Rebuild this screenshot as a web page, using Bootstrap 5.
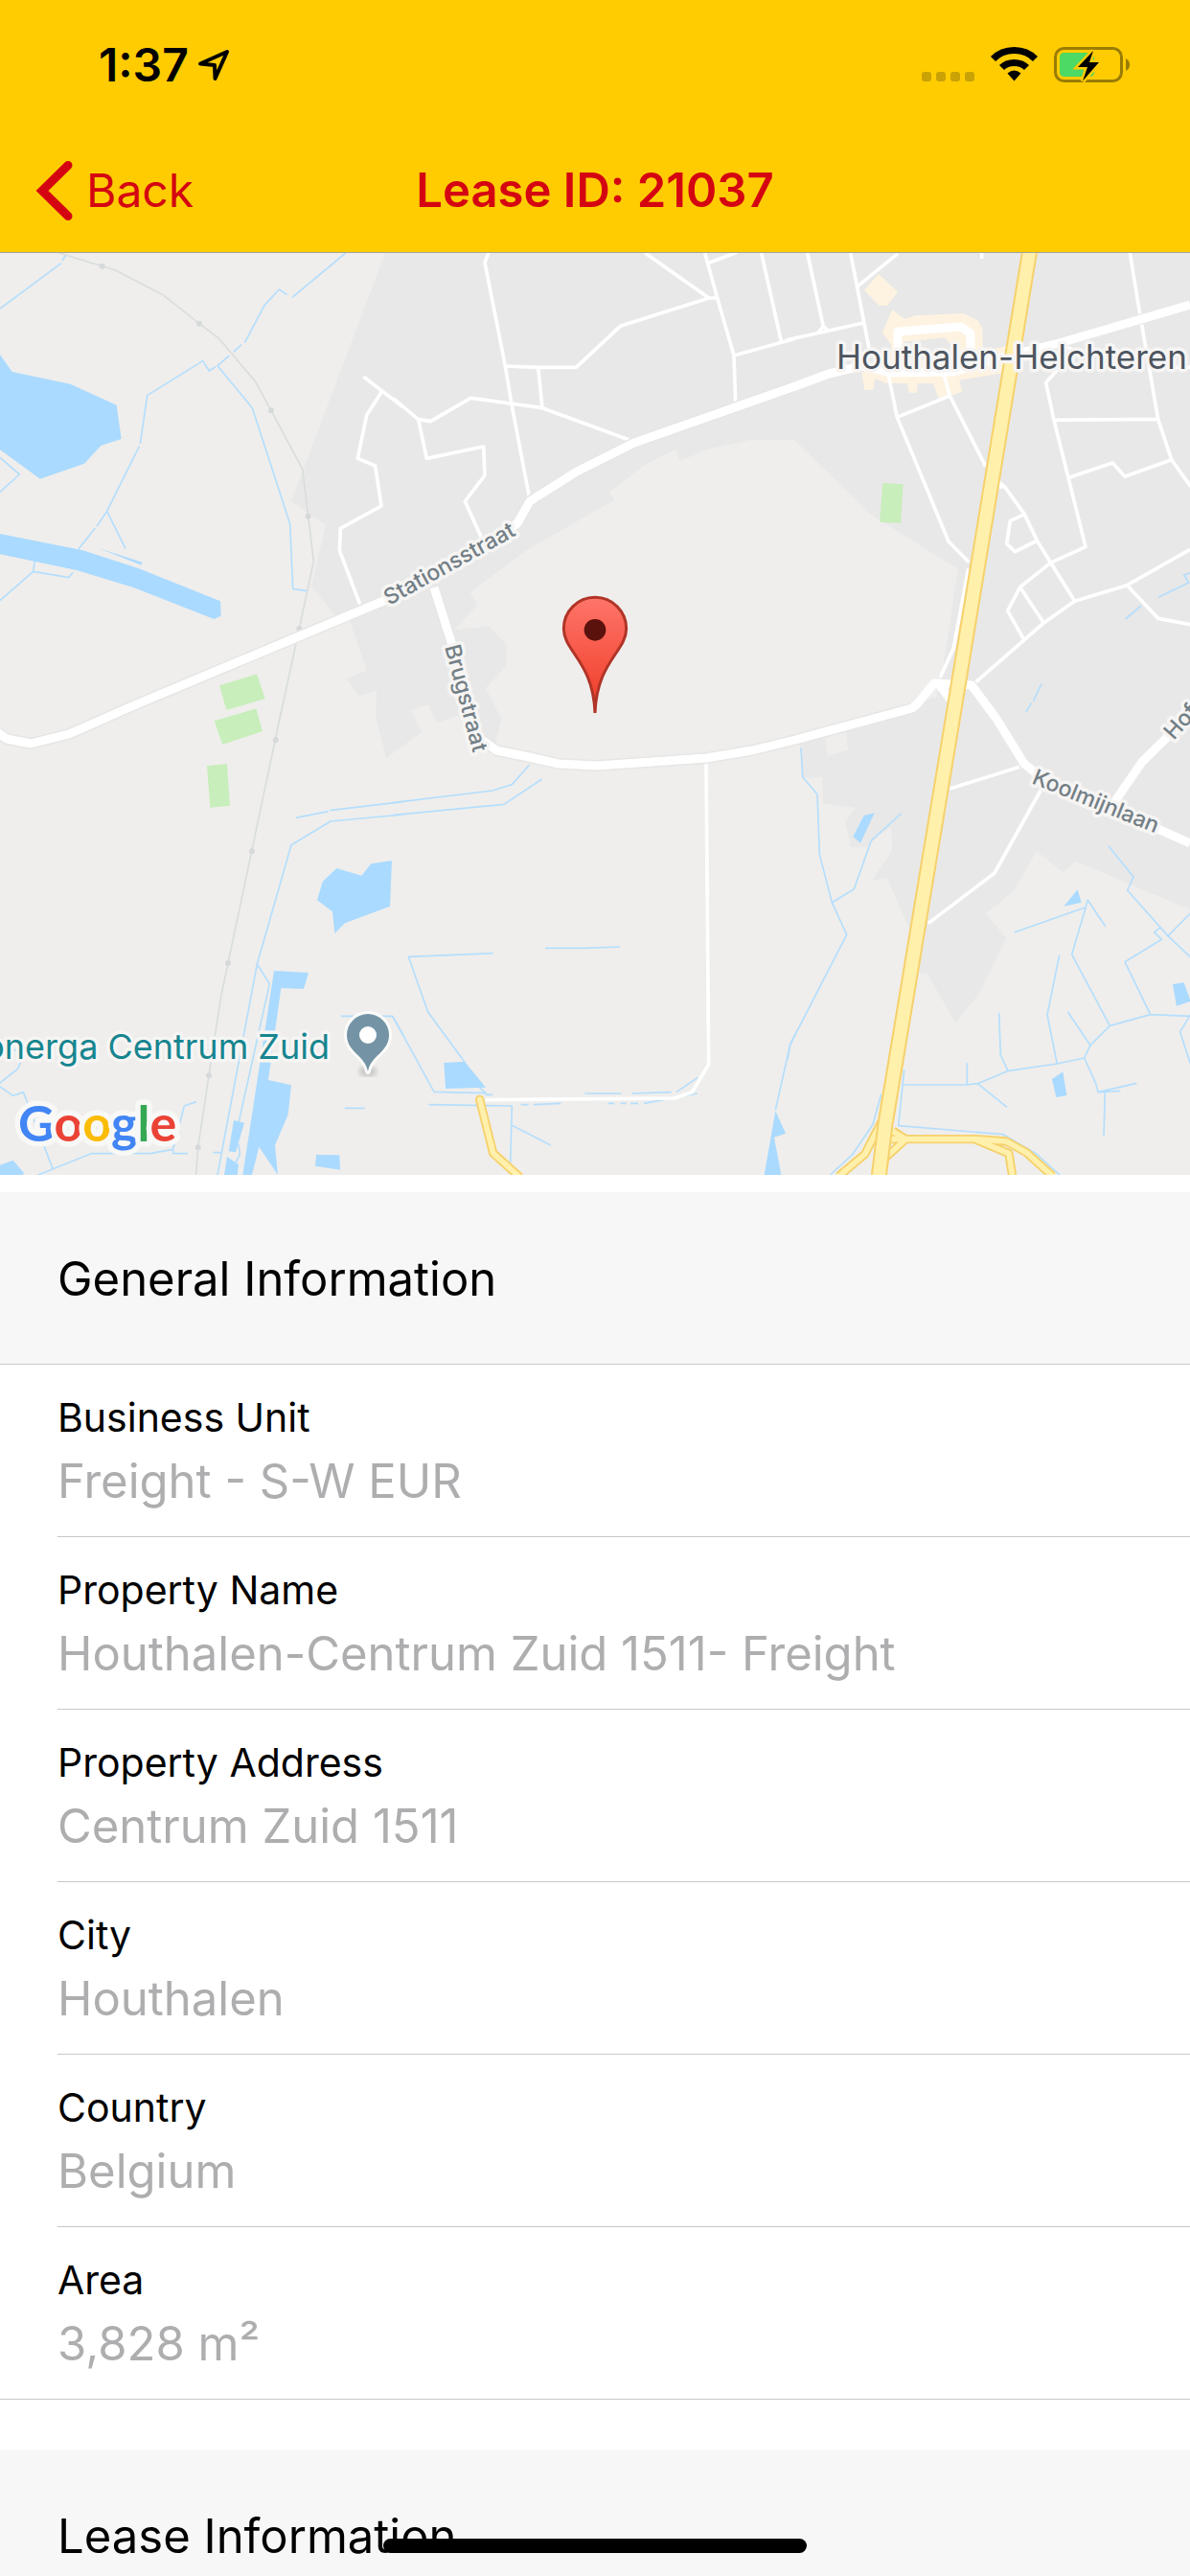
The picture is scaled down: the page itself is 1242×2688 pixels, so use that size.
<!DOCTYPE html>
<html lang="en">
<head>
<meta charset="utf-8">
<meta name="viewport" content="width=device-width, initial-scale=1">
<title>Lease ID: 21037</title>
<link href="https://cdn.jsdelivr.net/npm/bootstrap@5.3.0/dist/css/bootstrap.min.css" rel="stylesheet">
<style>
  body { font-family: Inter, "Liberation Sans", sans-serif; font-size: 49px; color: #000; }
  .app-header { background: #ffcc02; border-bottom: 1px solid #a7a39a; }
  .status-bar { height: 132px; padding: 4px 62px 0 103px; }
  .status-time { font-size: 48px; font-weight: 600; line-height: 60px; }
  .title-bar { height: 131px; padding: 2px 37px 0; color: #d40511; --bs-gutter-x: 0; }
  .title-bar a { color: inherit; gap: 14px; font-size: 48px; line-height: 64px; }
  .title-bar h1 { font-size: 49px; font-weight: 600; line-height: 64px; }
  .scroll-area { scrollbar-width: none; }
  .section-head { background: #f7f7f7; height: 180px; padding: 2px 60px 0; border-bottom: 1px solid #c8c7cc; }
  .section-head h2 { font-size: 49px; font-weight: 400; line-height: 64px; }
  .field-list { padding-left: 60px; border-bottom: 1px solid #c8c7cc; }
  .field-row { padding: 28px 0 25px; border-bottom: 1px solid #c8c7cc; }
  .field-row:last-child { border-bottom: 0; }
  .field-row dt { font-size: 41px; font-weight: 400; line-height: 54px; margin-bottom: 8px; }
  .field-row dd { line-height: 64px; color: #aeaeb0; }
  .gap-top { margin-top: 18px; }
  .gap-section { margin-top: 52px; }
  .home-bar { width: 442px; height: 15px; bottom: 24px; background: #000; }

  .map text { font-family: Inter, "Liberation Sans", sans-serif; paint-order: stroke; stroke: #f6f5f4; stroke-width: 7px; stroke-linejoin: round; }
  .map .street { font-size: 23px; font-weight: 500; fill: #737f86; }
  .map .town { font-size: 35px; fill: #4d5560; }
  .map .poi { font-size: 36px; fill: #16858f; }
  .map .brand { font-family: Lato, sans-serif; font-size: 52px; font-weight: 700; stroke: #f8f8f7; stroke-width: 11px; }
  .stream { fill: none; stroke: #b5defc; stroke-width: 5; stroke-linejoin: round; }
  .lake { fill: #aadaff; }
  .park { fill: #c8eebb; }
  .shop { fill: #fef3e0; }
  .rail { fill: none; stroke: #dadddd; stroke-width: 5; }
  .lane { fill: none; stroke: #fff; stroke-width: 11; stroke-linejoin: round; }
  .road { fill: none; stroke: #fff; stroke-width: 9; stroke-linejoin: round; }
  .road-edge { fill: none; stroke: #e6e6e5; stroke-width: 12; stroke-linejoin: round; }
  .ramp-edge { fill: none; stroke: #f6d16c; stroke-width: 28; stroke-linejoin: round; }
  .ramp { fill: none; stroke: #fff0ac; stroke-width: 17; stroke-linejoin: round; }
</style>
<script src="https://cdn.jsdelivr.net/npm/bootstrap@5.3.0/dist/js/bootstrap.bundle.min.js"></script>
</head>
<body class="vh-100 overflow-hidden d-flex flex-column bg-white">

<header class="app-header flex-shrink-0">
  <div class="status-bar d-flex align-items-center justify-content-between">
    <div class="d-flex align-items-center gap-2">
      <span class="status-time">1:37</span>
      <svg width="36" height="36" viewBox="0 0 36 36" aria-label="Location"><path d="M4 16.500 L32 4 L19.500 32 L19 18 Z" fill="none" stroke="#000" stroke-width="4" stroke-linejoin="round"/></svg>
    </div>
    <svg width="220" height="40" viewBox="0 0 220 40" aria-label="Network and battery">
      <g fill="#c9a206"><rect x="2" y="27" width="10" height="10" rx="3"/><rect x="17" y="27" width="10" height="10" rx="3"/><rect x="32" y="27" width="10" height="10" rx="3"/><rect x="47" y="27" width="10" height="10" rx="3"/></g>
      <g fill="none" stroke="#000" stroke-width="7"><path d="M76.500 13.500 C88 1.500 109 1.500 120.500 13.500"/><path d="M85.500 22.500 C92 15.700 105 15.700 111.500 22.500"/></g>
      <path d="M91.500 28.500 Q98.500 22.500 105.500 28.500 L98.500 36.500Z"/>
      <rect x="141.500" y="2.500" width="69" height="34" rx="9" fill="none" stroke="#9a7c06" stroke-width="3"/>
      <path d="M215 13 q4 2 4 6.500 t-4 6.500z" fill="#9a7c06"/>
      <rect x="146" y="7" width="36" height="25" rx="4.500" fill="#4cd964"/>
      <path d="M181 5 L165 22 h10 L170 36.500 L187 17 h-10 Z" fill="#000" stroke="#ffcc02" stroke-width="5" stroke-linejoin="miter" paint-order="stroke"/>
    </svg>
  </div>
  <nav class="title-bar row align-items-center">
    <div class="col d-flex">
      <a href="#" class="d-flex align-items-center text-decoration-none">
        <svg width="39" height="64" viewBox="0 0 39 64" aria-hidden="true"><path d="M34 5.500 L7 32 L34 58.500" fill="none" stroke="#d40511" stroke-width="9" stroke-linecap="round" stroke-linejoin="miter"/></svg>
        <span>Back</span>
      </a>
    </div>
    <div class="col-auto"><h1 class="m-0">Lease ID: 21037</h1></div>
    <div class="col"></div>
  </nav>
</header>

<main class="scroll-area flex-grow-1 overflow-auto">
  <svg class="map d-block w-100" viewBox="0 264 1242 962" role="img" aria-label="Map of Houthalen-Helchteren">
    <defs>
      <linearGradient id="pinFill" x1="0" y1="0" x2="0" y2="1"><stop offset="0" stop-color="#fe7569"/><stop offset="1" stop-color="#f03a26"/></linearGradient>
      <filter id="soft"><feGaussianBlur stdDeviation="3"/></filter>
    </defs>
    <rect y="264" width="1242" height="962" fill="#efeeec"/>

    <!-- built-up areas -->
    <path fill="#e8e8e8" d="M402 264 L304 523 340 548 325 612 348 640 365 648 383 700 361 708 375 726 393 721 392 747 403 791 440 764 429 741 447 735 456 754 477 747 517 777 523 750 507 718 529 694 529 673 511 654 474 657 498 632 491 618 550 574 641 522 636 513 676 483 705 469 710 481 738 469 783 459 829 459 909 537 1000 594 982 710 977 728 890 750 822 773 835 777 838 812 858 811 859 838 893 843 882 858 888 884 905 884 909 877 930 863 931 887 910 919 926 916 948 967 960 1016 968 1016 997 1067 1022 1037 1050 979 1029 953 1058 930 1082 888 1109 910 1123 899 1242 949 V264Z"/>
    <path fill="#efeeec" d="M861 768 L883 763 885 783 864 789Z"/>

    <!-- north-west -->
    <g transform="translate(0 260) scale(.33333)">
      <path class="stream" d="M0 186 L192 44 M195 36 L206 18 M1082 12 L915 151 M899 143 L874 126 828 176 766 293 M756 299 L731 322 M718 333 L681 365 790 497 908 860 917 1063 960 1070 M675 368 L655 381 635 350 461 458 439 609 M436 617 L335 820 303 868 M298 873 L245 940 M335 820 L393 938 M0 652 L61 705 0 760 M0 1100 L104 1009 215 1028 228 1012 M104 1009 L109 975"/>
      <path class="lake" d="M0 330 L38 384 220 422 365 488 380 594 316 615 264 671 126 719 0 628Z M0 891 L260 943 435 1000 690 1102 692 1148 670 1158 420 1060 240 1005 0 955Z M308 936 L445 980 443 989Z"/>
      <path class="rail" d="M185 12 L360 65 510 143 624 233 686 280 800 415 849 505 947 688 965 836 982 978 937 1188 876 1470"/>
      <g fill="#d6d9da"><circle cx="320" cy="53" r="9"/><circle cx="624" cy="233" r="9"/><circle cx="849" cy="505" r="9"/><circle cx="965" cy="836" r="9"/><circle cx="937" cy="1188" r="9"/></g>
      <path class="park" d="M687 1366 L804 1330 830 1407 709 1443Z"/>
      <path class="lane" d="M1138 399 L1260 493 M1196 445 L1148 520 1120 655 1175 678 1194 804 1066 874 1063 943 1127 1112"/>
    </g>

    <!-- north -->
    <g transform="translate(410 260) scale(.33333)">
      <path class="lane" d="M300 10 L288 42 352 366 372 486 427 775 M352 366 L455 370 574 370 712 241 990 153 M790 12 L990 153 1016 153 M977 12 L1016 153 1068 333 1073 482 M985 44 L1078 10 M1154 12 L1216 288 M1068 333 L1260 280 M455 370 L468 497 M0 466 L80 533 118 539 244 466 468 497 742 598 M80 533 L106 655 284 618 288 708 226 789 285 920"/>
    </g>

    <!-- north-east -->
    <g transform="translate(822 260) scale(.33333)">
      <path class="shop" d="M240 128 L285 78 345 134 311 177 287 177Z M297 260 L328 190 366 218 400 208 550 201 595 222 610 250 612 320 700 300 690 385 537 410 547 445 520 456 472 465 456 420 408 420 404 449 380 449 375 420 310 420 273 405 268 440 241 440 232 385 320 360 325 300Z"/>
      <path fill="#e8e8e8" d="M362 290 L492 277 520 310 520 345 362 345Z"/>
      <path class="park" d="M298 732 L362 736 354 858 288 854Z"/>
      <path class="stream" d="M1260 1014 L1241 1020 1256 1044 1161 1090 M1107 1116 L1058 1158 M795 1361 L769 1415 M764 1421 L746 1450"/>
      <path class="lane" d="M62 12 L112 242 95 262 M112 242 L130 256 M-5 285 L237 231 M197 12 L255 310 M216 119 L345 14 M316 395 L343 526 504 915 568 980 M343 526 L508 459 490 395 M508 459 L620 680 M660 728 L680 744 742 830 782 914 899 1102 M660 744 H680 M742 830 L697 851 686 922 712 947 782 912 M823 982 L728 1058 802 1170 M728 1058 L689 1132 740 1222 M823 982 L933 932 834 535 809 418 850 372 M834 535 L1160 532 M877 716 L1018 669 1056 712 1202 659 M1072 12 L1103 202 M1109 236 L1160 532 1202 659 1262 743 M1260 940 L1063 1052 899 1102 802 1170 590 1355 M1063 1052 L1160 1156 1262 1175 M608 12 V30 M478 1340 L520 1248 566 1000 M1130 370 H1260 M850 300 L940 330"/>
    </g>

    <!-- south-west -->
    <g transform="translate(0 740) scale(.33333)">
      <path class="park" d="M671 37 L802 -2 822 69 697 111Z M648 178 L711 171 720 302 658 308Z"/>
      <path class="rail" d="M882 0 L714 795 692 900 654 1147 620 1372 614 1458"/>
      <g fill="#d6d9da"><circle cx="863" cy="97" r="9"/><circle cx="789" cy="445" r="9"/><circle cx="714" cy="795" r="9"/><circle cx="654" cy="1147" r="9"/><circle cx="620" cy="1372" r="9"/></g>
      <path class="stream" d="M926 340 L1028 320 M1033 317 L1260 290 M1260 330 L1035 351 912 425 805 798 844 860 746 1300 M805 798 L681 1458 M1067 961 H1229 L1262 1020 M1079 1249 H1142 M0 1170 L55 1126 79 1075 0 1055 M0 1182 L41 1210 73 1199 165 1438 M120 1458 L285 1391 H470 L542 1378 577 1242 615 1229 M542 1370 V1391 H588 M667 1388 H692 M746 1360 L751 1393 738 1420"/>
      <path class="lake" d="M1054 498 L1132 521 1162 484 1227 474 1221 617 1080 670 1048 702 1041 634 993 598 1010 540Z M858 819 L966 825 951 876 880 873 840 1161 912 1177 902 1270 861 1365 870 1458 811 1370 789 1458 H760Z M732 1287 L765 1295 738 1387 716 1384Z M711 1401 L747 1426 743 1458 H702Z M990 1395 L1063 1396 1065 1442 987 1430Z M0 1427 L41 1412 75 1452 71 1458 H0Z"/>
    </g>

    <!-- south -->
    <g transform="translate(410 740) scale(.33333)">
      <path class="stream" d="M0 293 L312 255 373 236 428 174 M0 332 L348 298 467 219 M314 764 L49 775 110 948 225 1105 M0 962 L129 1198 292 1202 260 1175 M290 1207 H313 M112 1238 L373 1242 368 1420 M373 1303 L494 1365 M477 748 H600 L710 744 M401 1238 H425 M440 1238 L526 1234 M601 1203 H715 M748 1203 L872 1199 M888 1199 L955 1153 M674 1234 H694 M713 1234 H731 M744 1234 H768 M786 1234 L953 1203 M1260 1018 L1244 1050 1198 1255"/>
      <path class="lake" d="M160 1107 L225 1103 291 1184 165 1188Z M1198 1258 L1230 1328 1194 1340 1216 1458 H1163Z"/>
      <path class="lane" d="M981 172 L989 1112 937 1199 880 1218 290 1223"/>
      <path class="ramp-edge" stroke-linecap="round" d="M272 1222 L314 1390 394 1462"/>
      <path class="ramp" stroke-linecap="round" d="M272 1222 L314 1390 394 1462"/>
    </g>

    <!-- south-east -->
    <g transform="translate(822 740) scale(.33333)">
      <path class="lane" d="M508 249 L726 181 M792 255 L648 513 440 671"/>
      <path class="stream" d="M42 121 L47 212 93 266 100 455 139 605 185 706 8 1050 0 1095 M139 605 L208 563 262 412 355 327 M1005 428 L1083 525 1064 567 1191 710 1262 777 M1191 710 L1262 638 M1166 685 L1148 698 1171 721 1056 791 1136 956 1262 961 M1136 956 L1009 991 948 1052 929 1092 844 1110 688 1133 595 1172 562 1176 H360 M562 1108 V1176 M595 1172 L687 1246 M662 950 L667 1083 690 1133 M851 770 L813 957 844 1110 M877 947 L948 1052 M1009 991 L890 768 940 598 995 680 M931 621 L711 698 M929 1092 L965 1172 972 1199 1042 1195 M972 1199 L1093 1171 M994 1199 L990 1336 M1262 955 L1229 1010 1262 1112 M365 1130 L347 1304 675 1331 780 1393 852 1458 M293 1205 L267 1300 204 1393 133 1458"/>
      <path class="lake" d="M239 333 L272 325 228 419 205 399Z M908 565 L920 605 865 617Z M862 1135 L874 1209 841 1215 828 1158Z M1206 861 L1241 856 1262 914 1218 929Z"/>
      <path class="ramp-edge" d="M295 1290 L242 1393 160 1462 M330 1320 L370 1346 H590 L685 1353 748 1388 830 1462 M585 1346 L693 1391 704 1462 M370 1346 L300 1410 M315 1346 H370"/>
      <path class="ramp" d="M295 1290 L242 1393 160 1462 M320 1316 L370 1346 H590 L685 1353 748 1388 830 1462 M585 1346 L693 1391 704 1462 M370 1346 L300 1410 M315 1346 H370"/>
    </g>

    <!-- main roads -->
    <g id="roads">
      <path class="road-edge" d="M-4 763 L7 771 32 776 72 766 140 736 410 623 520 560 540 546 553 523 602 492 662 462 830 403 M453 613 L472 673 500 770 518 783 557 791 583 797 623 799 737 791 785 783 830 772 952 739"/>
      <path class="road" d="M-4 763 L7 771 32 776 72 766 140 736 410 623 520 560 540 546 553 523 602 492 662 462 830 403 865 390 899 382 932 389 995 388 1049 372 1109 357 1242 318 M937 388 V346 L1003 341 1013 348 V380"/>
      <path class="road" d="M453 613 L472 673 500 770 518 783 557 791 583 797 623 799 737 791 785 783 830 772 952 739 957 735 975 713 1014 715 1040 750 1069 797 1089 813 1159 843 1242 880 M1159 843 L1192 795 1242 746 M980 714 L992 730"/>
    </g>

    <!-- highway -->
    <path fill="none" stroke="#f6d16c" stroke-width="17" d="M1075 260 L996 740 930 1137 924 1173 917 1230"/>
    <path fill="none" stroke="#fff0ac" stroke-width="13" d="M1075 260 L996 740 930 1137 924 1173 917 1230"/>

    <!-- place names -->
    <text class="street" transform="translate(406 632) rotate(-29)">Stationsstraat</text>
    <text class="street" transform="translate(464 675) rotate(75)">Brugstraat</text>
    <text class="street" transform="translate(1076 817) rotate(22)">Koolmijnlaan</text>
    <text class="street" transform="translate(1225 773) rotate(-48)">Hof</text>
    <text class="town" x="873" y="385">Houthalen-Helchteren</text>
    <text class="poi" x="344" y="1105" text-anchor="end">onerga Centrum Zuid</text>
    <ellipse cx="384" cy="1118" rx="9" ry="5" fill="#999" opacity=".6" filter="url(#soft)"/>
    <path d="M384 1118 C381 1101 362 1098 362 1080 A22 22 0 0 1 406 1080 C406 1098 387 1101 384 1118Z" fill="#7494a6" stroke="#fbfbfa" stroke-width="6" paint-order="stroke" stroke-linejoin="round"/>
    <circle cx="384" cy="1080" r="9" fill="#fff"/>

    <!-- selected property -->
    <g transform="translate(410 260) scale(.33333)">
      <path d="M633 1452 C627 1290 535 1260 535 1188 A98 98 0 0 1 731 1188 C731 1260 639 1290 633 1452Z" fill="url(#pinFill)" stroke="#b03427" stroke-width="9"/>
      <circle cx="633" cy="1192" r="34" fill="#5b120d"/>
    </g>

    <text class="brand" x="19" y="1191"><tspan fill="#4285f4">G</tspan><tspan fill="#ea4335">o</tspan><tspan fill="#fbbc05">o</tspan><tspan fill="#4285f4">g</tspan><tspan fill="#34a853">l</tspan><tspan fill="#ea4335">e</tspan></text>
  </svg>

  <section class="gap-top">
    <div class="section-head d-flex align-items-center"><h2 class="m-0">General Information</h2></div>
    <dl class="field-list m-0">
      <div class="field-row"><dt>Business Unit</dt><dd class="m-0">Freight - S-W EUR</dd></div>
      <div class="field-row"><dt>Property Name</dt><dd class="m-0">Houthalen-Centrum Zuid 1511- Freight</dd></div>
      <div class="field-row"><dt>Property Address</dt><dd class="m-0">Centrum Zuid 1511</dd></div>
      <div class="field-row"><dt>City</dt><dd class="m-0">Houthalen</dd></div>
      <div class="field-row"><dt>Country</dt><dd class="m-0">Belgium</dd></div>
      <div class="field-row"><dt>Area</dt><dd class="m-0">3,828 m²</dd></div>
    </dl>
  </section>
  <section class="gap-section">
    <div class="section-head d-flex align-items-center"><h2 class="m-0">Lease Information</h2></div>
  </section>
</main>

<div class="home-bar position-fixed start-50 translate-middle-x rounded-pill"></div>
</body>
</html>
